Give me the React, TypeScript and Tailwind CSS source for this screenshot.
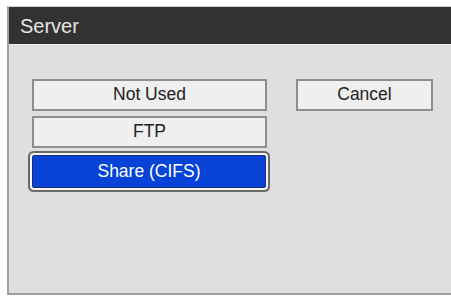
import React from "react";

const btn =
  "flex items-center justify-center border-2 border-[#8e8e8e] bg-[#efefef] text-[#222] text-[17.5px] leading-none";

export default function App() {
  return (
    <div
      className="w-[451px] h-[296px] bg-white pt-[6px] pl-[7px] overflow-hidden"
      style={{ fontFamily: '"Liberation Sans", Arial, sans-serif' }}
    >
      <div className="flex flex-col w-[444px] h-[289px] border-l-2 border-b-2 border-t border-[#a0a0a0] border-t-[#d0d0d0] bg-[#dfdfdf]">
        <div className="h-[38px] bg-[#323232] border-b border-[#f2f2f2] flex items-center pl-[11px] text-[#e6e6e6] text-[20px]">
          Server
        </div>
        <div className="flex pl-[23px] pt-[34px] gap-[29px]">
          <div className="flex flex-col w-[235px]">
            <div className={`${btn} h-[32px]`}>Not Used</div>
            <div className={`${btn} h-[32px] mt-[5px]`}>FTP</div>
            <div className="mt-[7px] h-[33px] w-[234px] flex items-center justify-center bg-[#0643d6] border border-[#1a2c7a] text-white text-[17.5px] leading-none rounded-[2px] shadow-[0_0_0_2px_#f4f4f4,0_0_0_4px_#6a6a6a]">
              Share (CIFS)
            </div>
          </div>
          <div className={`${btn} h-[32px] w-[137px]`}>Cancel</div>
        </div>
      </div>
    </div>
  );
}
